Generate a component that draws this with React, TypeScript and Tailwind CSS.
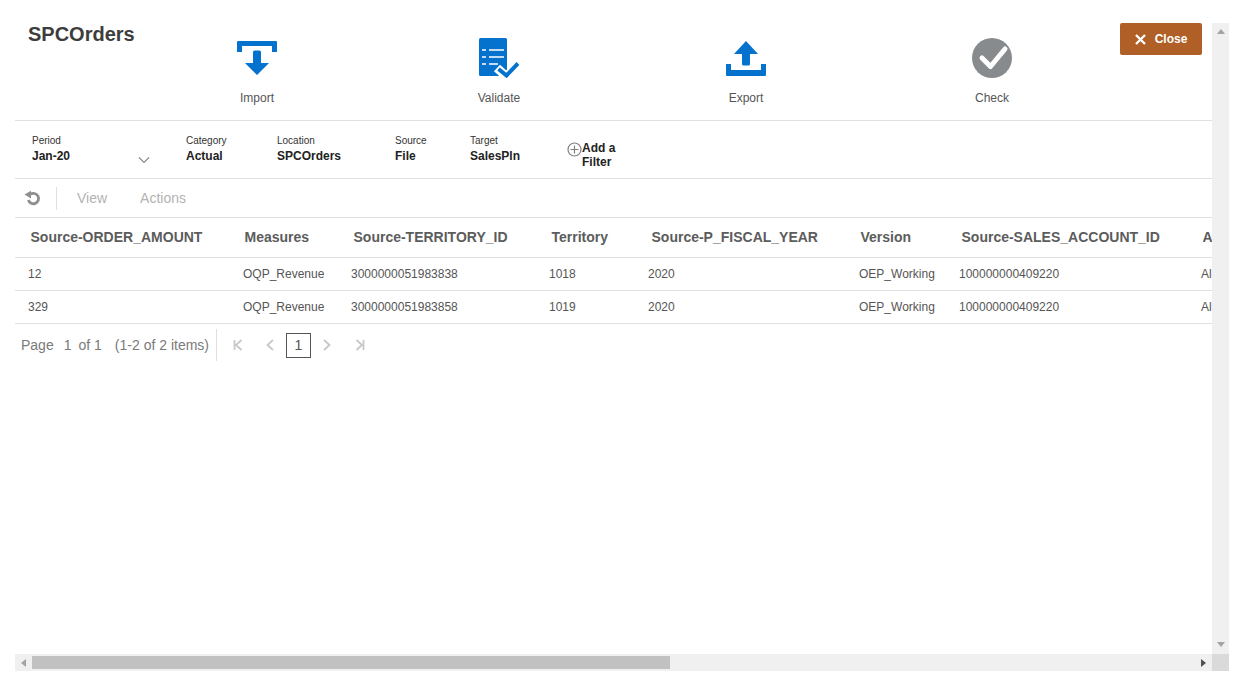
const font = "font-['Liberation_Sans',Arial,sans-serif]";

const filters = [
  { label: "Category", value: "Actual", w: "w-[91px]" },
  { label: "Location", value: "SPCOrders", w: "w-[118px]" },
  { label: "Source", value: "File", w: "w-[75px]" },
  { label: "Target", value: "SalesPln", w: "w-[97px]" },
];

const columns = [
  "Source-ORDER_AMOUNT",
  "Measures",
  "Source-TERRITORY_ID",
  "Territory",
  "Source-P_FISCAL_YEAR",
  "Version",
  "Source-SALES_ACCOUNT_ID",
  "Account",
];

const rows = [
  ["12", "OQP_Revenue", "3000000051983838", "1018", "2020", "OEP_Working", "100000000409220", "All_Account"],
  ["329", "OQP_Revenue", "3000000051983858", "1019", "2020", "OEP_Working", "100000000409220", "All_Account"],
];

const cellPad = ["pl-[13px]", "pl-[14px]", "pl-[13px]", "pl-[13px]", "pl-[12px]", "pl-[14px]", "pl-[13px]", "pl-[14px]"];

const gridCols = "grid grid-cols-[214px_109px_198px_100px_209px_101px_241px_120px] w-[1292px]";

function ImportIcon() {
  return (
    <svg width="40" height="40" viewBox="0 0 40 40" fill="#0572ce">
      <path d="M1 3h38a1 1 0 0 1 1 1v10h-5V8H5v6H0V4a1 1 0 0 1 1-1z" />
      <path d="M16 14a1.5 1.5 0 0 1 1.5-1.5h5A1.5 1.5 0 0 1 24 14v11h8L20 37 8 25h8z" />
    </svg>
  );
}

function ValidateIcon() {
  return (
    <svg width="40" height="40" viewBox="0 0 40 40">
      <rect x="0" y="0" width="28" height="38" rx="1.5" fill="#0572ce" />
      <g stroke="#fff" strokeWidth="1.4">
        <path d="M3 12h4M10 12h15M3 19h4M10 19h15M3 26h4M10 26h9" />
      </g>
      <path d="M18 30l9.5 8.5L40 25" fill="none" stroke="#fff" strokeWidth="9" />
      <path d="M19.5 31l8 6.5L39 25.5" fill="none" stroke="#0572ce" strokeWidth="4" />
    </svg>
  );
}

function ExportIcon() {
  return (
    <svg width="40" height="40" viewBox="0 0 40 40" fill="#0572ce">
      <path d="M20 3l12 13h-8v10a1.5 1.5 0 0 1-1.5 1.5h-5A1.5 1.5 0 0 1 16 26V16H8z" />
      <path d="M0 26h5v6h30v-6h5v11a1 1 0 0 1-1 1H1a1 1 0 0 1-1-1z" />
    </svg>
  );
}

function CheckIcon() {
  return (
    <svg width="40" height="40" viewBox="0 0 40 40">
      <circle cx="20" cy="20" r="20" fill="#888b8e" />
      <path d="M10 20l8.5 8.5L33 11" fill="none" stroke="#fff" strokeWidth="5" strokeLinecap="round" strokeLinejoin="round" />
    </svg>
  );
}

function Action({ icon, label, className }: { icon: React.ReactNode; label: string; className: string }) {
  return (
    <div className={`flex flex-col items-center w-[100px] pt-[15px] ${className}`}>
      {icon}
      <div className="mt-[12px] text-[12px] leading-4 text-[#555]">{label}</div>
    </div>
  );
}

function Triangle({ dir, color }: { dir: "up" | "down" | "left" | "right"; color: string }) {
  const points = {
    up: "0,5 4,0 8,5",
    down: "0,0 8,0 4,5",
    left: "5,0 5,8 0,4",
    right: "0,0 0,8 5,4",
  }[dir];
  const vertical = dir === "up" || dir === "down";
  return (
    <svg width={vertical ? 8 : 5} height={vertical ? 5 : 8} viewBox={vertical ? "0 0 8 5" : "0 0 5 8"}>
      <polygon points={points} fill={color} />
    </svg>
  );
}

function PageIcon({ d }: { d: string }) {
  return (
    <svg width="12" height="12" viewBox="0 0 12 12" fill="none" stroke="#c8c8c8" strokeWidth="1.8">
      <path d={d} />
    </svg>
  );
}

export default function App() {
  return (
    <div className={`${font} w-[1240px] h-[691px] bg-white flex flex-col pt-[23px] pb-[20px] pl-[15px] pr-[11px] overflow-hidden`}>
      <div className="flex flex-1 min-h-0">
        <div className="flex-1 min-w-0 overflow-hidden">
          {/* header */}
          <div className="flex items-start h-[98px] border-b border-[#e0e0e0]">
            <h1 className="w-[192px] pl-[13px] text-[20px] leading-[22px] font-bold text-[#3d3d3d]">SPCOrders</h1>
            <Action icon={<ImportIcon />} label="Import" className="" />
            <Action icon={<ValidateIcon />} label="Validate" className="ml-[142px]" />
            <Action icon={<ExportIcon />} label="Export" className="ml-[147px]" />
            <Action icon={<CheckIcon />} label="Check" className="ml-[146px]" />
            <button className="ml-auto mr-[10px] w-[82px] h-[32px] rounded-[2px] bg-[#b06026] text-white text-[12px] font-bold flex items-center justify-center gap-[9px]">
              <svg width="11" height="11" viewBox="0 0 11 11" stroke="#fff" strokeWidth="2.4">
                <path d="M1 1l9 9M10 1l-9 9" />
              </svg>
              Close
            </button>
          </div>

          {/* filter bar */}
          <div className="flex h-[58px] border-b border-[#e0e0e0] pl-[17px] pt-[14px]">
            <div className="relative w-[154px]">
              <div className="text-[10px] leading-3 text-[#333]">Period</div>
              <div className="mt-[1px] text-[12px] leading-4 font-bold text-[#222]">Jan-20</div>
              <svg className="absolute left-[106px] top-[21px]" width="12" height="8" viewBox="0 0 12 8" fill="none" stroke="#8a8a8a" strokeWidth="1.1">
                <path d="M1 1.5l5 5 5-5" />
              </svg>
            </div>
            {filters.map((f) => (
              <div key={f.label} className={f.w}>
                <div className="text-[10px] leading-3 text-[#333]">{f.label}</div>
                <div className="mt-[1px] text-[12px] leading-4 font-bold text-[#222]">{f.value}</div>
              </div>
            ))}
            <div className="flex items-start pt-[6px]">
              <svg className="mt-[1px]" width="15" height="15" viewBox="0 0 15 15" fill="none" stroke="#808080" strokeWidth="1.2">
                <circle cx="7.5" cy="7.5" r="6.5" />
                <path d="M3.5 7.5h8M7.5 3.5v8" />
              </svg>
              <div className="text-center text-[12px] leading-[14px] font-bold text-[#222]">
                <div>Add a</div>
                <div className="pr-[4px]">Filter</div>
              </div>
            </div>
          </div>

          {/* toolbar */}
          <div className="flex items-center h-[39px] border-b border-[#e0e0e0] pl-[9px]">
            <svg width="17" height="17" viewBox="0 0 17 17" fill="none">
              <path d="M6.5 4.2A5.2 5.2 0 1 1 4.4 10" stroke="#8f8f8f" strokeWidth="2.8" />
              <path d="M0.5 4.5L7 0.8V8.5z" fill="#8f8f8f" />
            </svg>
            <div className="w-px h-[23px] bg-[#e0e0e0] ml-[15px]" />
            <span className="ml-[20px] text-[14px] text-[#b3b3b3]">View</span>
            <span className="ml-[33px] text-[14px] text-[#b3b3b3]">Actions</span>
          </div>

          {/* table */}
          <div className={`${gridCols} h-[40px] items-center border-b border-[#e0e0e0] text-[14px] font-bold text-[#5c5c5c]`}>
            {columns.map((c) => (
              <div key={c} className="pl-[15.5px] whitespace-nowrap">{c}</div>
            ))}
          </div>
          {rows.map((row) => (
            <div key={row[0]} className={`${gridCols} h-[33px] items-center border-b border-[#e0e0e0] text-[12px] text-[#555]`}>
              {row.map((cell, i) => (
                <div key={i} className={`${cellPad[i]} whitespace-nowrap`}>{cell}</div>
              ))}
            </div>
          ))}

          {/* pagination */}
          <div className="flex items-center h-[42px] pl-[6px] text-[14px] text-[#7a7a7a] whitespace-nowrap">
            <span>Page</span>
            <span className="ml-[10px]">1</span>
            <span className="ml-[7px]">of 1</span>
            <span className="ml-[13px]">(1-2 of 2 items)</span>
            <div className="w-px h-[32px] bg-[#e0e0e0] ml-[7px]" />
            <div className="ml-[15px] flex"><PageIcon d="M2.5 1v10M9.5 1L4 6l5.5 5" /></div>
            <div className="ml-[20px] flex"><PageIcon d="M9 1L3.5 6 9 11" /></div>
            <div className="ml-[10px] w-[25px] h-[25px] border border-[#555] flex items-center justify-center text-[#555]">1</div>
            <div className="ml-[10px] flex"><PageIcon d="M3 1l5.5 5L3 11" /></div>
            <div className="ml-[21px] flex"><PageIcon d="M9.5 1v10M2.5 1L8 6l-5.5 5" /></div>
          </div>
        </div>

        {/* vertical scrollbar */}
        <div className="w-[17px] bg-[#f0f0f0] flex flex-col items-center justify-between pt-[6px] pb-[7px]">
          <Triangle dir="up" color="#a3a3a3" />
          <Triangle dir="down" color="#a3a3a3" />
        </div>
      </div>

      {/* horizontal scrollbar */}
      <div className="flex h-[17px]">
        <div className="flex-1 bg-[#f0f0f0] flex items-center">
          <div className="w-[17px] flex justify-center"><Triangle dir="left" color="#a3a3a3" /></div>
          <div className="w-[638px] h-[13px] bg-[#c1c1c1]" />
          <div className="ml-auto w-[17px] flex justify-center"><Triangle dir="right" color="#505050" /></div>
        </div>
        <div className="w-[17px] bg-[#dadada]" />
      </div>
    </div>
  );
}
